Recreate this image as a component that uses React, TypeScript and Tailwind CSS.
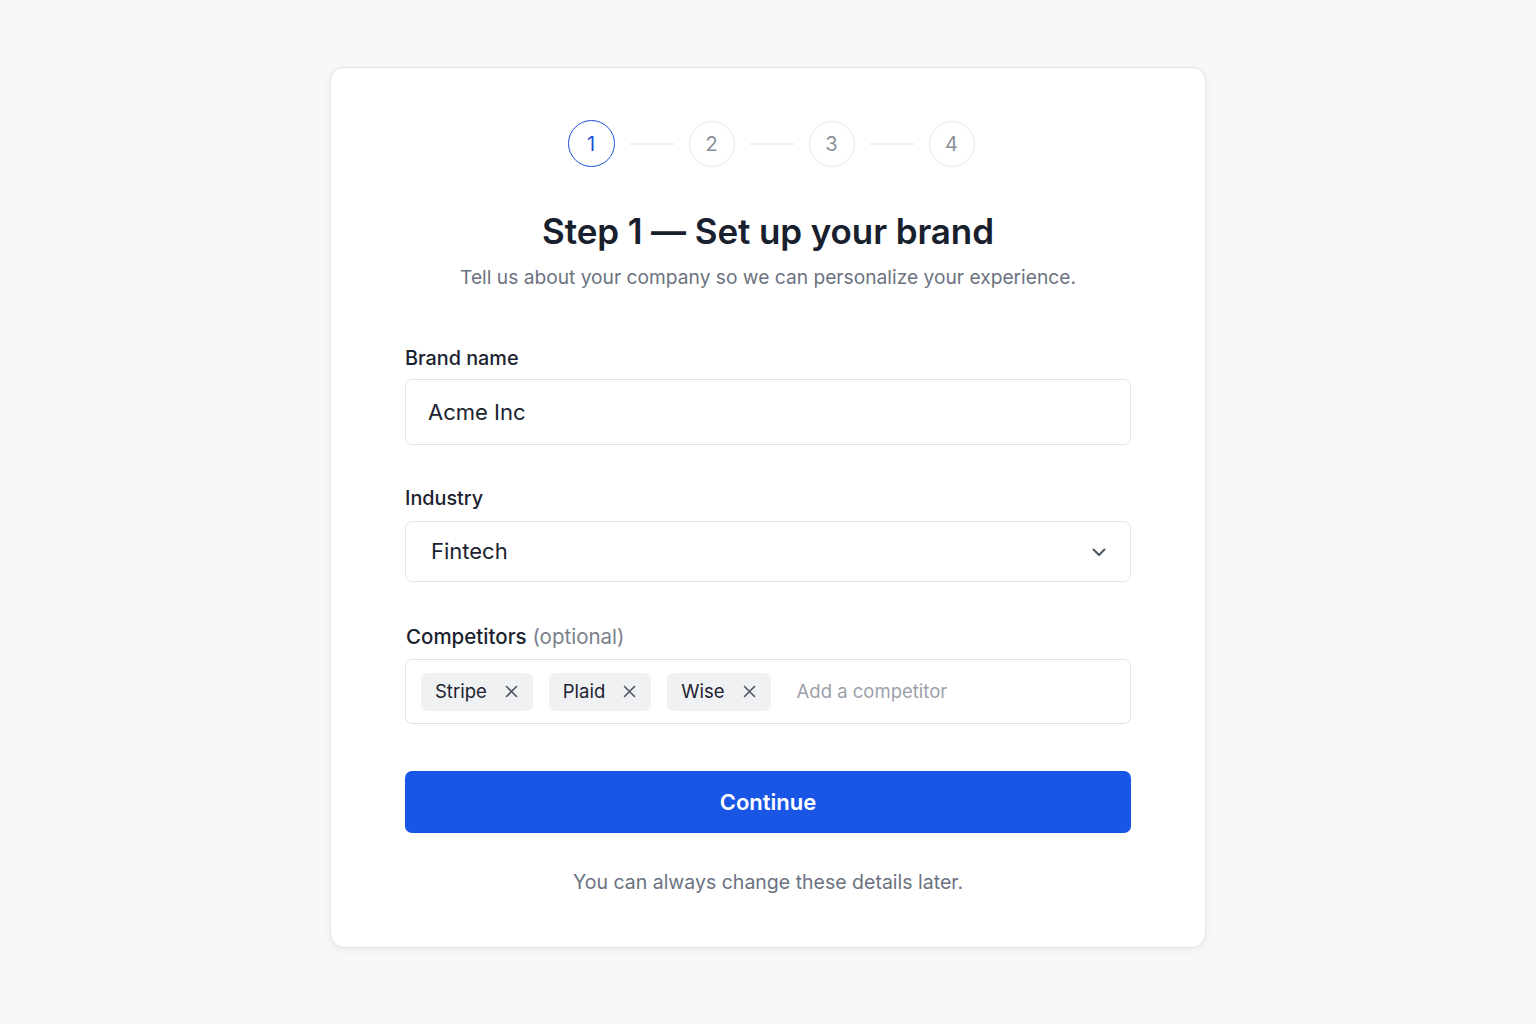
import React from "react";

const steps = [1, 2, 3, 4];

function X() {
  return (
    <svg width="13" height="13" viewBox="0 0 13 13" fill="none" stroke="#4b5563" strokeWidth="1.6" strokeLinecap="round">
      <path d="M1.5 1.5 L11.5 11.5 M11.5 1.5 L1.5 11.5" />
    </svg>
  );
}

export default function App() {
  return (
    <div className="min-h-screen w-full bg-[#f7f8fa] flex justify-center pt-[67px]" style={{ fontFamily: "Inter, 'Noto Sans', sans-serif" }}>
      <div className="w-[876px] h-[881px] bg-white border border-[#e3e5e9] rounded-[14px] shadow-[0_2px_6px_rgba(16,24,40,0.06)] px-[74px] pt-[52px] flex flex-col">
        <div className="flex items-center justify-center ml-[6px]">
          {steps.map((s, i) => (
            <React.Fragment key={s}>
              {i > 0 && <div className="w-[44px] h-[2px] bg-[#eceef1] mx-[15px]" />}
              <div
                className={
                  s === 1
                    ? "w-[47px] h-[47px] rounded-full border-[1.5px] border-[#1d4fd8] text-[#1d4fd8] flex items-center justify-center text-[20px]"
                    : "w-[46px] h-[46px] rounded-full border-[1.5px] border-[#e8eaee] text-[#8b9098] flex items-center justify-center text-[20px]"
                }
              >
                {s}
              </div>
            </React.Fragment>
          ))}
        </div>

        <h1 className="mt-[42px] text-center text-[35px] leading-[44px] font-semibold text-[#18202e] tracking-[-0.1px]">
          Step 1 — Set up your brand
        </h1>
        <p className="mt-[11px] text-center text-[19.2px] leading-[26px] text-[#6b7280]">
          Tell us about your company so we can personalize your experience.
        </p>

        <label className="mt-[56px] text-[19.8px] leading-[24px] font-medium text-[#1b2230]">Brand name</label>
        <div className="mt-[9px] h-[66px] border border-[#dfe2e6] rounded-[7px] flex items-center px-[22px] text-[22px] text-[#1b2230]">
          Acme Inc
        </div>

        <label className="mt-[41px] text-[19.8px] leading-[24px] font-medium text-[#1b2230]">Industry</label>
        <div className="mt-[11px] h-[61px] border border-[#dfe2e6] rounded-[7px] flex items-center justify-between pl-[25px] pr-[22px] text-[22px] text-[#1b2230]">
          <span>Fintech</span>
          <svg width="18" height="18" viewBox="0 0 18 18" fill="none" stroke="#4b5563" strokeWidth="2" strokeLinecap="round" strokeLinejoin="round">
            <path d="M3.5 6.5 L9 12 L14.5 6.5" />
          </svg>
        </div>

        <label className="mt-[43px] pl-[1px] text-[20.5px] leading-[24px] text-[#1b2230]">
          <span className="font-medium">Competitors</span> <span className="text-[#7b818b]">(optional)</span>
        </label>
        <div className="mt-[10px] h-[65px] border border-[#dfe2e6] rounded-[7px] flex items-center pl-[15px] gap-[16px] text-[18.5px]">
          {["Stripe", "Plaid", "Wise"].map((c) => (
            <div
              key={c}
              className="h-[38px] bg-[#f0f1f3] rounded-[6px] flex items-center pl-[14px] pr-[15px] gap-[18px] text-[#1b2230]"
            >
              <span>{c}</span>
              <X />
            </div>
          ))}
          <span className="ml-[10px] text-[#9ca1a9]">Add a competitor</span>
        </div>

        <button className="mt-[47px] h-[62px] w-full rounded-[7px] bg-[#1a56e6] text-white text-[22px] font-semibold">
          Continue
        </button>

        <p className="mt-[35px] text-center text-[19.5px] text-[#6b7280]">You can always change these details later.</p>
      </div>
    </div>
  );
}
